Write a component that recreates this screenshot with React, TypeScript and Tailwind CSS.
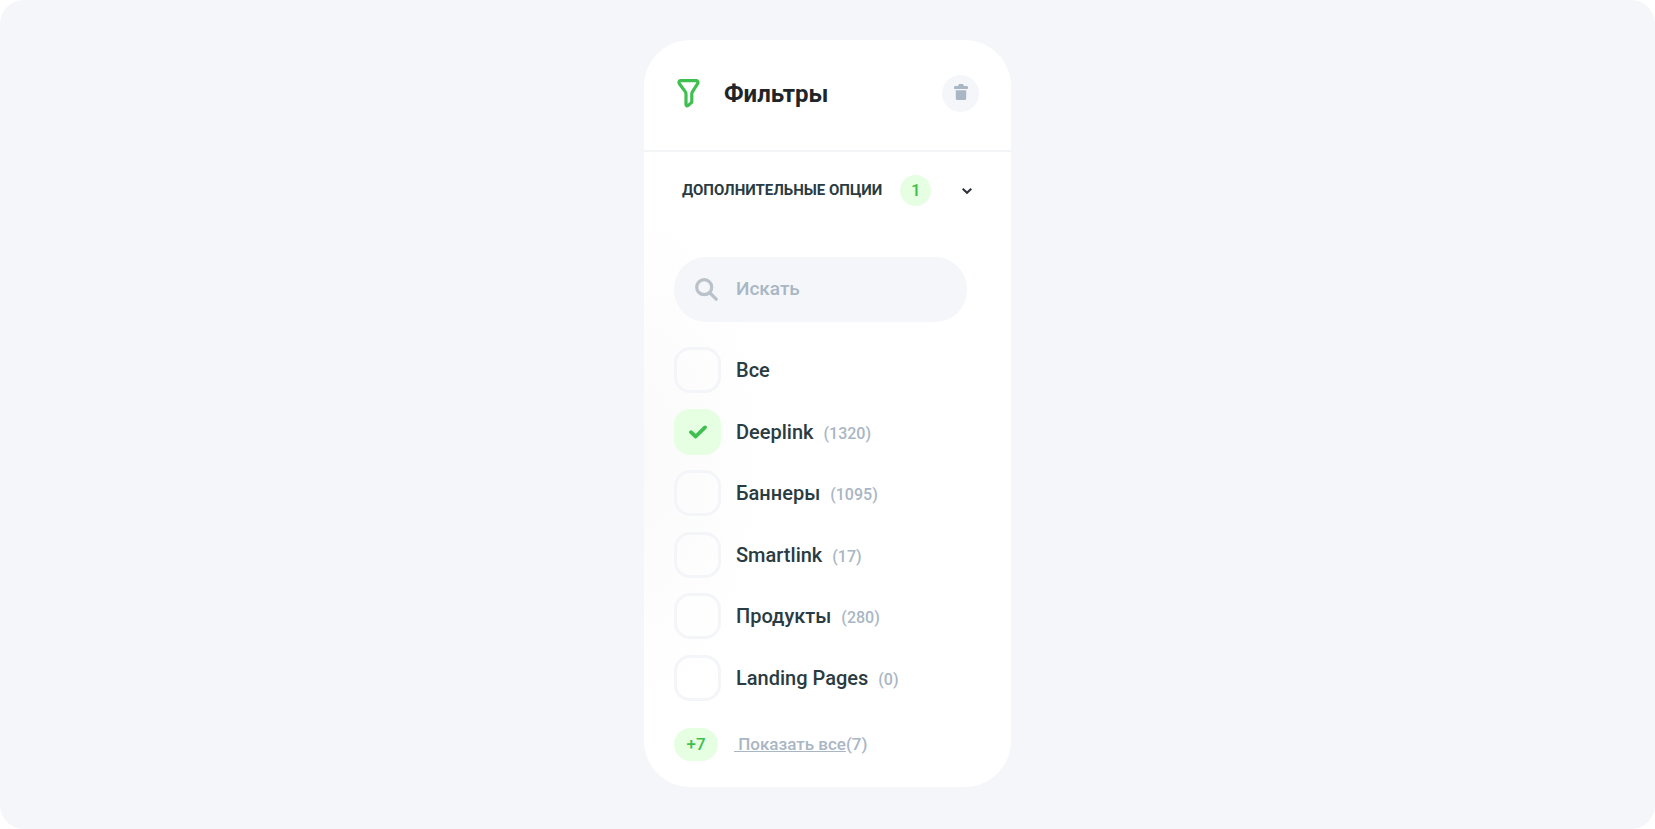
import { useState } from "react";

type Option = { id: string; label: string; count?: number };

const OPTIONS: Option[] = [
  { id: "all", label: "Все" },
  { id: "deeplink", label: "Deeplink", count: 1320 },
  { id: "banners", label: "Баннеры", count: 1095 },
  { id: "smartlink", label: "Smartlink", count: 17 },
  { id: "products", label: "Продукты", count: 280 },
  { id: "landing", label: "Landing Pages", count: 0 },
];

function FunnelIcon() {
  return (
    <svg className="shrink-0" width="23" height="30" viewBox="0 0 23 30" fill="none" stroke="#3fbf4f" strokeWidth="3.200" strokeLinejoin="round" aria-hidden="true">
      <path d="M3.600 1.700h15.800c1.500 0 2 1.500 1.200 3l-5.200 8.200c-.4.6-.6 1.200-.6 2v7.500c0 .7-.2 1.100-.7 1.500l-2.900 2.500c-1 .8-2.200.3-2.200-1V14.900c0-.8-.2-1.400-.6-2L2.400 4.700c-.9-1.500-.3-3 1.200-3z" />
    </svg>
  );
}

function TrashIcon() {
  return (
    <svg width="14" height="16" viewBox="0 0 14 16" fill="#a9b6c4" aria-hidden="true">
      <path d="M4.300 1.400C4.500.5 5 0 5.800 0h2.400c.8 0 1.300.5 1.500 1.400l.1.600h3c.7 0 1.200.6 1.200 1.300v.7c0 .6-.4 1-1 1H1c-.6 0-1-.4-1-1v-.7C0 2.600.5 2 1.200 2h3z" />
      <path d="M1.800 6.200h10.400v8.300c0 .9-.6 1.500-1.500 1.500H3.300c-.9 0-1.500-.6-1.500-1.500z" />
    </svg>
  );
}

function ChevronIcon() {
  return (
    <svg width="12" height="8" viewBox="0 0 12 8" fill="none" stroke="#2b3038" strokeWidth="2" aria-hidden="true">
      <path d="M1.700 1.700 6 5.800l4.300-4.100" />
    </svg>
  );
}

function SearchIcon() {
  return (
    <svg className="shrink-0" width="23" height="23" viewBox="0 0 23 23" fill="none" stroke="#bac2c9" strokeWidth="3.200" strokeLinecap="round" aria-hidden="true">
      <circle cx="9.200" cy="9.200" r="7.500" />
      <path d="m15 15 6.200 6.200" />
    </svg>
  );
}

function CheckIcon() {
  return (
    <svg className="pointer-events-none col-start-1 row-start-1 hidden peer-checked:block" width="18" height="14" viewBox="0 0 18 14" fill="none" stroke="#3fbf4f" strokeWidth="3.800" strokeLinecap="round" strokeLinejoin="round" aria-hidden="true">
      <path d="m2 7.200 4.700 4.300L16 2.400" />
    </svg>
  );
}

export default function App() {
  const [selected, setSelected] = useState<string[]>(["deeplink"]);

  const toggle = (id: string) =>
    setSelected((prev) => (prev.includes(id) ? prev.filter((x) => x !== id) : [...prev, id]));

  return (
    <main className="flex min-h-screen items-start justify-center rounded-[24px] bg-[#f4f6fa] py-10 font-['Roboto',sans-serif] font-medium">
      <section className="w-full max-w-[367px] rounded-[46px] bg-white bg-[radial-gradient(120px_250px_at_0%_56%,#fafafa,#ffffff)] pb-[26px]">
        <header className="flex items-center border-b-2 border-[#f3f4f6] pt-[35px] pr-8 pb-[38px] pl-[33px]">
          <FunnelIcon />
          <h1 className="ml-6 text-2xl font-bold text-[#212529]">Фильтры</h1>
          <button type="button" aria-label="Очистить" className="ml-auto flex size-[37px] items-center justify-center rounded-full bg-[#f4f6fa] pb-1">
            <TrashIcon />
          </button>
        </header>

        <button type="button" aria-expanded="true" className="flex w-full items-center pt-[23px] pr-[38px] pl-[38px] text-left">
          <span className="text-[15px] font-bold text-[#2a3b42] uppercase">Дополнительные опции</span>
          <span className="ml-[18px] flex size-[31px] items-center justify-center rounded-full bg-[#e6ffe3] text-[17px] text-[#3fbf4f]">1</span>
          <span className="ml-auto">
            <ChevronIcon />
          </span>
        </button>

        <div className="px-[30px]">
          <label className="mt-[51px] mr-[14px] flex h-[65px] items-center gap-[18px] rounded-[32px] bg-[#f4f6fa] px-[21px]">
            <SearchIcon />
            <input type="search" aria-label="Искать" placeholder="Искать" className="w-full min-w-0 bg-transparent text-[19px] text-[#2a3b42] outline-none placeholder:text-[#a9b6c4]" />
          </label>

          <ul className="mt-[25px] flex h-[354px] flex-col justify-between">
            {OPTIONS.map((o) => (
              <li key={o.id}>
                <label className="flex h-[46px] cursor-pointer items-center">
                  <span className="grid shrink-0 place-items-center">
                    <input
                      type="checkbox"
                      checked={selected.includes(o.id)}
                      onChange={() => toggle(o.id)}
                      className="peer col-start-1 row-start-1 h-[46px] w-[47px] appearance-none rounded-2xl border-[3px] border-[#f4f5f9] checked:border-[#e6ffe3] checked:bg-[#e6ffe3]"
                    />
                    <CheckIcon />
                  </span>
                  <span className="ml-[15px] flex items-baseline gap-[10px] text-xl text-[#2a3b42]">
                    {o.label}
                    {o.count !== undefined && <span className="text-base text-[#a9b6c4]">({o.count})</span>}
                  </span>
                </label>
              </li>
            ))}
          </ul>

          <div className="mt-[27px] flex items-center gap-4 text-[17px]">
            <span className="flex h-[33px] w-11 items-center justify-center rounded-full bg-[#e6ffe3] text-[#3fbf4f]">+7</span>
            <a href="#all" className="whitespace-pre text-[#a9b6c4]">
              <span className="underline"> Показать все</span>(7)
            </a>
          </div>
        </div>
      </section>
    </main>
  );
}
